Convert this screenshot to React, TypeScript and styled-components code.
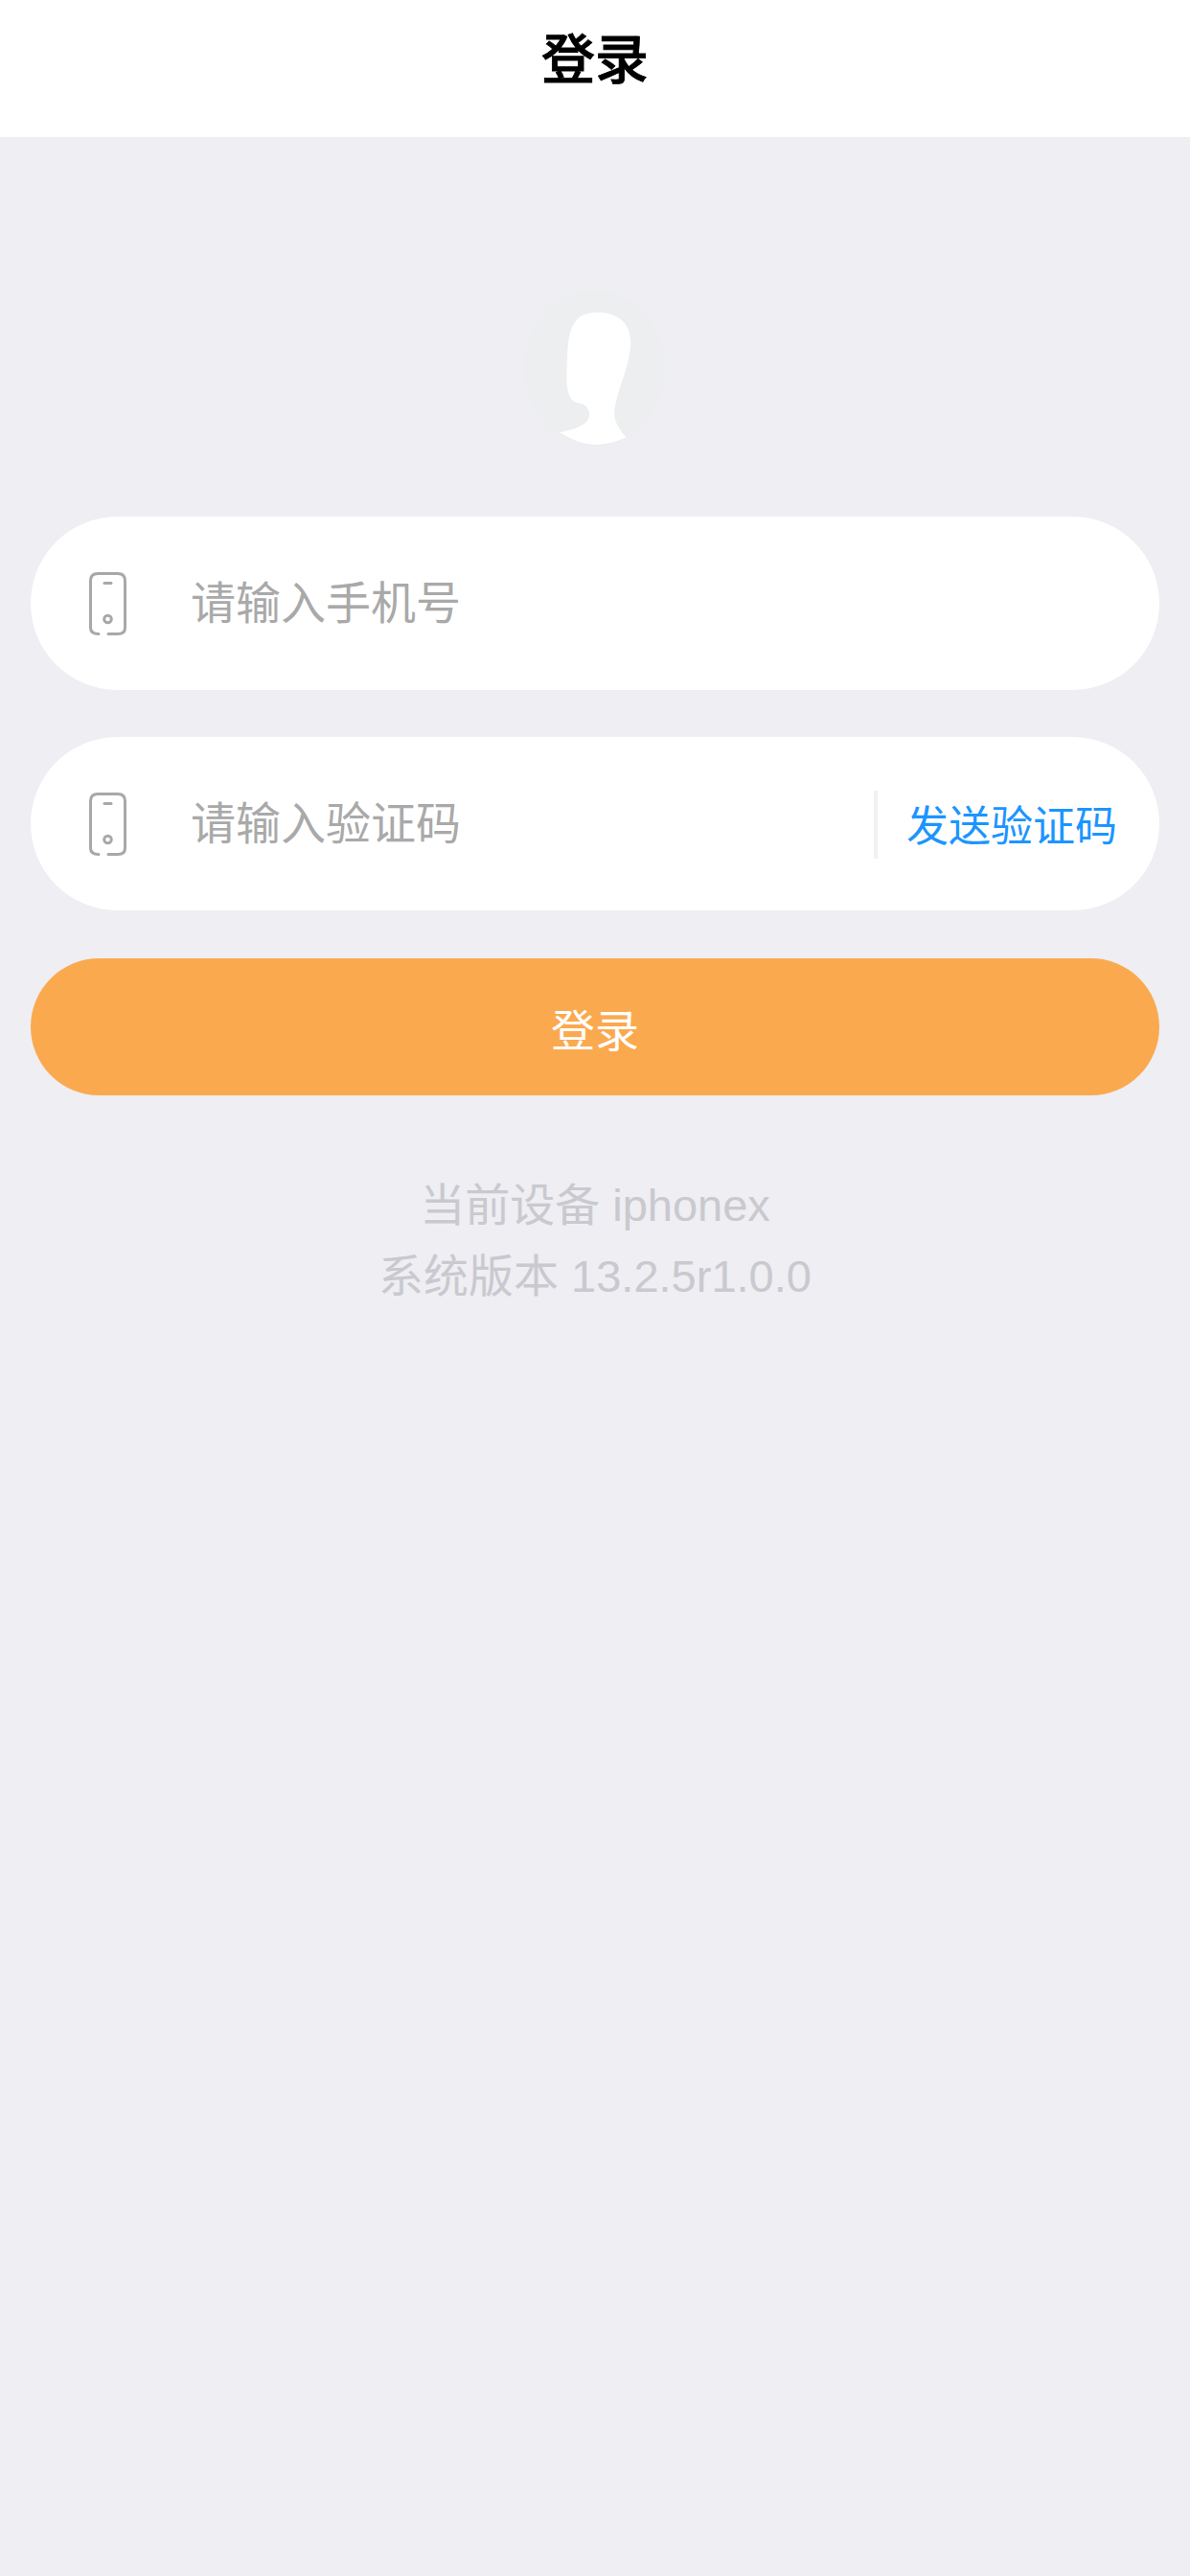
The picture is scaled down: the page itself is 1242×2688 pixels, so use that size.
import React from "react";
import styled, { createGlobalStyle } from "styled-components";

const FONT = `"Liberation Sans", "Noto Sans CJK SC", sans-serif`;

const GlobalStyle = createGlobalStyle`
  html, body {
    margin: 0;
    padding: 0;
    background: #eeeef3;
    font-family: ${FONT};
  }
`;

function PhoneIcon() {
  return (
    <StIcon viewBox="0 0 39 66" fill="none" stroke="#a8a8a8" strokeWidth="3" strokeLinecap="round">
      <path d="M10 64.5C4.5 64.5 1.5 62 1.5 58V9C1.5 4 4 1.5 9 1.5H30C35 1.5 37.5 4 37.5 9V58C37.5 62 35 64.5 30 64.5H20" />
      <path d="M16 11.5H23" />
      <circle cx="19.5" cy="49" r="3.8" />
    </StIcon>
  );
}

function Avatar() {
  return (
    <StAvatar viewBox="141 70 438 486">
      <ellipse cx="360" cy="313" rx="219" ry="243" fill="#edeeef" />
      <path
        fill="#ffffff"
        d="M250 515C290 505 340 495 342 460C343 430 320 425 300 420C275 410 268 370 272 310C275 260 272 200 300 165C320 140 350 138 385 140C430 145 470 170 472 230C472 280 450 340 435 385C425 420 415 450 425 480C432 500 445 515 458 530C420 548 380 555 350 552C310 550 280 532 250 515Z"
      />
    </StAvatar>
  );
}

export default function App() {
  return (
    <StPage>
      <GlobalStyle />
      <StHeader>登录</StHeader>
      <StMain>
        <Avatar />
        <StForm>
          <StField>
            <PhoneIcon />
            <StInput placeholder="请输入手机号" />
          </StField>
          <StField>
            <PhoneIcon />
            <StInput placeholder="请输入验证码" />
            <StDivider />
            <StSend type="button">发送验证码</StSend>
          </StField>
          <StButton type="button">登录</StButton>
        </StForm>
        <StInfo>
          <div>当前设备 iphonex</div>
          <div>系统版本 13.2.5r1.0.0</div>
        </StInfo>
      </StMain>
    </StPage>
  );
}

const StPage = styled.div`
  min-height: 2688px;
  background: #eeeef3;
`;
const StHeader = styled.header`
  height: 143px;
  padding-bottom: 28px;
  box-sizing: border-box;
  background: #ffffff;
  display: flex;
  align-items: center;
  justify-content: center;
  font-size: 56px;
  font-weight: 500;
  -webkit-text-stroke: 0.8px #000000;
  color: #000000;
`;
const StMain = styled.main`
  display: flex;
  flex-direction: column;
  align-items: center;
  padding: 160px 32px 0;
`;
const StAvatar = styled.svg`
  width: 146px;
  height: 162px;
  display: block;
`;
const StForm = styled.form`
  align-self: stretch;
  display: flex;
  flex-direction: column;
  gap: 49px;
  margin-top: 74px;
`;
const StField = styled.div`
  height: 181px;
  border-radius: 91px;
  background: #ffffff;
  display: flex;
  align-items: center;
  padding: 0 44px 0 61px;
`;
const StIcon = styled.svg`
  width: 39px;
  height: 66px;
  flex-shrink: 0;
`;
const StInput = styled.input`
  flex: 1;
  min-width: 0;
  margin-left: 67px;
  padding: 0;
  border: none;
  outline: none;
  background: transparent;
  font-family: ${FONT};
  font-size: 47px;
  color: #333333;

  &::placeholder {
    color: #a9a9a9;
    opacity: 1;
  }
`;
const StDivider = styled.span`
  width: 4px;
  height: 71px;
  margin-top: 2px;
  background: #f1f1f3;
`;
const StSend = styled.button`
  margin: -2px 0 0 30px;
  padding: 0;
  border: none;
  background: transparent;
  font-family: ${FONT};
  font-size: 44px;
  white-space: nowrap;
  color: #1b95ff;
`;
const StButton = styled.button`
  height: 143px;
  margin-top: 1px;
  border: none;
  border-radius: 72px;
  background: #fba94f;
  font-family: ${FONT};
  font-size: 46px;
  color: #ffffff;
`;
const StInfo = styled.div`
  margin-top: 78px;
  font-size: 47px;
  line-height: 74px;
  text-align: center;
  color: #c9c9ce;
`;
